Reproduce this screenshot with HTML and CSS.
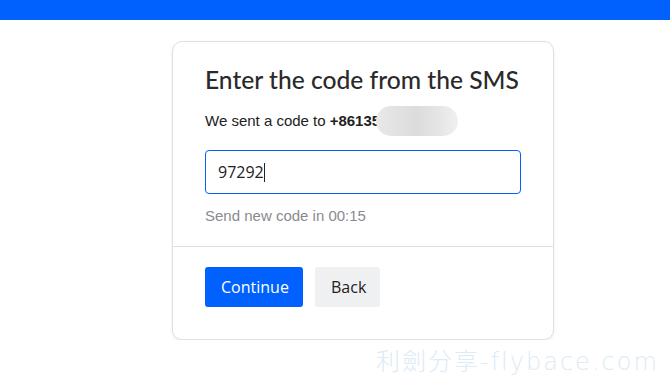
FILE: index.html
```html
<!DOCTYPE html>
<html lang="en">
<head>
    <meta charset="UTF-8">
    <meta name="viewport" content="width=device-width, initial-scale=1.0">
    <title>SMS code</title>
    <link rel="stylesheet" href="styles.css">
</head>
<body>
    <div class="topbar"></div>

    <div class="page">
        <div class="card">
            <div class="card-body">
                <h1>Enter the code from the SMS</h1>
                <p class="sent">We sent a code to <b>+86135</b><span class="blur"></span></p>

                <div class="field">
                    <span class="value">97292</span><span class="caret"></span>
                </div>

                <p class="resend">Send new code in 00:15</p>
            </div>

            <div class="card-foot">
                <button type="button" class="btn btn-primary">Continue</button>
                <button type="button" class="btn btn-light">Back</button>
            </div>
        </div>
    </div>

    <div class="watermark">利劍分享-flybace.com</div>
</body>
</html>
```

FILE: styles.css
```css
body{
    margin: 0;
    background: #fff;
    font-family: "Liberation Sans", Arial, sans-serif;
    color: #222;
    overflow: hidden;
}

.topbar{
    height: 20px;
    background: #0061fe;
}

.page{
    padding: 21px 0 0 172px;
}

/*****
card
******/
.card{
    width: 380px;
    border: 1px solid #e0e0e4;
    border-radius: 10px;
    box-shadow: 0 1px 3px rgba(0,0,0,0.08);
    background: #fff;
}

.card-body{
    padding: 22px 32px 20px 32px;
    border-bottom: 1px solid #e0e0e4;
}

.card-body h1{
    margin: 0;
    font-family: Lato, sans-serif;
    font-weight: 500;
    font-size: 24.6px;
    line-height: 32px;
    color: #2a2a2a;
}

.sent{
    margin: 10px 0 0;
    font-size: 15px;
    line-height: 22px;
    color: #222;
    display: flex;
    align-items: center;
}

.sent b{
    margin-left: 4px;
}

.blur{
    display: inline-block;
    width: 82px;
    height: 30px;
    margin-left: -4px;
    border-radius: 15px;
    background: linear-gradient(90deg, #e9e9ea 0%, #e2e2e3 25%, #dcdcdd 50%, #e5e5e6 75%, #f0f0f1 100%);
}

.field{
    margin-top: 14px;
    height: 42px;
    border: 1px solid #0061fe;
    border-radius: 4px;
    display: flex;
    align-items: center;
    padding-left: 12px;
    font-family: "Open Sans", sans-serif;
    font-size: 16px;
    color: #222;
}

.caret{
    display: inline-block;
    width: 1px;
    height: 19px;
    background: #222;
}

.resend{
    margin: 12px 0 0;
    font-size: 15px;
    line-height: 20px;
    color: #8a8a8e;
}

.card-foot{
    padding: 20px 32px 32px 32px;
    display: flex;
    gap: 12px;
}

.btn{
    height: 40px;
    border: none;
    border-radius: 3px;
    font-family: "Open Sans", sans-serif;
    font-size: 16px;
    padding: 0 16px;
}

.btn-primary{
    background: #0061fe;
    color: #fff;
    width: 98px;
}

.btn-light{
    background: #eff0f2;
    color: #222;
    width: 65px;
}

.watermark{
    position: absolute;
    left: 376px;
    top: 342px;
    white-space: nowrap;
    font-family: "DejaVu Sans", "Noto Sans CJK SC", sans-serif;
    font-weight: 300;
    font-size: 24px;
    letter-spacing: 2px;
    color: #dcebf6;
}
```
